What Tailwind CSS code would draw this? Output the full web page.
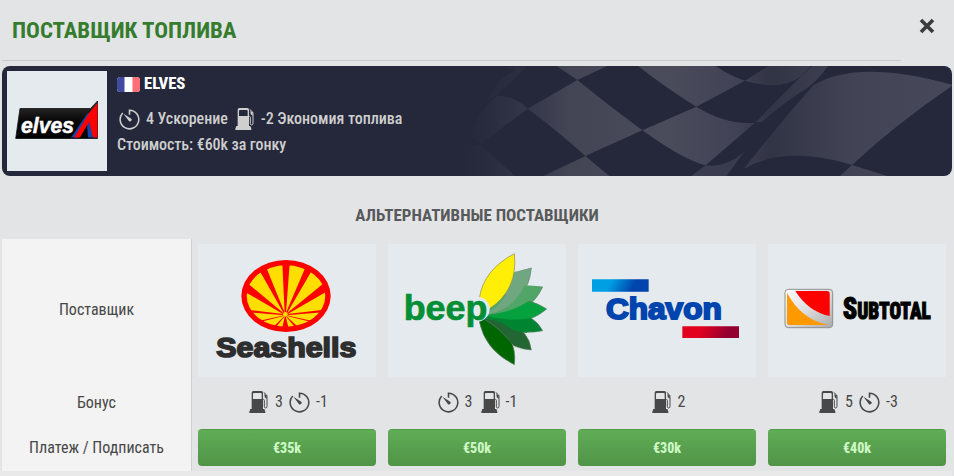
<!doctype html>
<html lang="ru">

<head>
    <meta charset="UTF-8">
    <meta name="viewport" content="width=device-width, initial-scale=1.0">
    <title>Поставщик топлива</title>
    <script src="https://cdn.jsdelivr.net/npm/@tailwindcss/browser@4"></script>
</head>

<body class="h-[476px] overflow-hidden bg-[#e3e4e6] font-['Roboto_Condensed','Roboto',sans-serif] font-stretch-condensed text-base text-[#484848]">

    <!-- icons -->
    <svg class="hidden">
        <symbol id="pump" viewBox="0 0 55 66">
            <path fill="currentColor" fill-rule="evenodd" d="M12 0H36Q41 0 41 5V54H45L48 62V66H0V62L3 54H7V5Q7 0 12 0ZM14 6Q11 6 11 9V24H37V9Q37 6 34 6Z" />
            <path fill="none" stroke="currentColor" stroke-width="3" d="M43 4L51 11Q53 13 53 17V46Q53 51 49 51Q45 51 45 46V28Q45 25 42 25" />
            <path fill="currentColor" d="M45 9L52 13V23L46 19Z" />
        </symbol>
        <symbol id="timer" viewBox="0 0 62 62">
            <path fill="none" stroke="currentColor" stroke-width="4.600" d="M31 17V3.500A27.500 27.500 0 1 1 11 12" />
            <path fill="currentColor" d="M13 14L34 27A5 5 0 1 1 28 34Z" />
        </symbol>
    </svg>

    <header class="flex h-[61px] w-[899px] items-center border-b border-[#c9cacc] ml-0.5 pl-2.5 pt-[3px]">
        <h1 class="text-[22.9px] font-bold text-[#367c2e] whitespace-nowrap">ПОСТАВЩИК ТОПЛИВА</h1>
        <button class="absolute left-[919px] top-[18px]" aria-label="close">
            <svg class="size-4" viewBox="0 0 16 16" stroke="#3c3c3c" stroke-width="3.700">
                <path d="M2 2L14 14M14 2L2 14" />
            </svg>
        </button>
    </header>

    <!-- current supplier -->
    <section class="relative mx-0.5 mt-[5px] flex h-[110px] overflow-hidden rounded-lg bg-[#25273a] p-[5px] text-[#cfcfcf]">
        <svg class="absolute right-0 top-0 h-[110px] w-[492px]" viewBox="0 18 1476 330">
            <defs>
                <linearGradient id="sq" x1="0" x2="1476" y1="0" y2="0" gradientUnits="userSpaceOnUse">
                    <stop offset="0" stop-color="#25273a" />
                    <stop offset=".06" stop-color="#292b3e" />
                    <stop offset=".13" stop-color="#333548" />
                    <stop offset=".22" stop-color="#434555" />
                    <stop offset=".42" stop-color="#4a4c5a" />
                    <stop offset=".56" stop-color="#414256" />
                    <stop offset=".63" stop-color="#313444" />
                    <stop offset=".8" stop-color="#424456" />
                    <stop offset="1" stop-color="#474859" />
                </linearGradient>
            </defs>
            <g fill="url(#sq)">
                <path d="M290 18H442L352 60Z" />
                <path d="M352 60Q450 140 547 211L376 288Q290 210 203 146Z" />
                <path d="M534 18H767Q810 48 855 62L709 140Q620 85 534 18Z" />
                <path d="M855 62L925 18H1052L1025 48Q960 95 855 62Z" />
                <path d="M709 140Q800 196 885 188L737 316Q670 300 547 211Z" />
                <path d="M376 288L448 348H250Z" />
                <path d="M203 146Q160 105 110 108Q50 160 30 220L62 252Z" />
                <path d="M62 256Q110 300 166 348H0V256Z" />
                <path d="M125 24L200 18Q130 90 90 120Q100 60 170 30Z" opacity=".5" />
                <path d="M737 316Q800 324 852 276L800 348H694Z" opacity=".7" />
                <path d="M1056 18H1104Q1070 65 1040 85Q970 130 905 186H888Q960 110 1056 18Z" />
                <path d="M1060 76Q1190 -5 1476 74L1476 78Q1310 190 1176 315Q980 255 852 326Q950 200 1060 76Z" />
                <path d="M1176 315L1282 348H1140Z" />
            </g>
        </svg>
        <div class="flex size-[100px] bg-[#e5eaee]">
            <svg class="size-[100px]" viewBox="0 0 100 100">
                <defs>
                    <linearGradient id="blk" x2="0" y2="1">
                        <stop stop-color="#333" />
                        <stop offset=".5" stop-color="#0a0a0a" />
                        <stop offset="1" />
                    </linearGradient>
                </defs>
                <path fill="url(#blk)" stroke="#111" stroke-width=".8" d="M13 37.500H83.500L90.500 30V67.500H8.700Z" />
                <path fill="#1444ae" d="M64 66.500L80 43L89 38L90 66.500H81L80 53L71 66.500Z" />
                <path fill="#f00" d="M67 66.500L82 42L90.500 32V66.500H86L82 51L73 66.500Z" />
                <text x="14" y="61.500" fill="#fff" stroke="#fff" stroke-width=".5" font-family="Liberation Sans" font-size="22" font-weight="bold" font-style="italic" textLength="53" lengthAdjust="spacingAndGlyphs">elves</text>
            </svg>
        </div>
        <div class="relative ml-2.5">
            <h2 class="flex h-[26px] items-center gap-1 text-[16.7px] font-extrabold text-white">
                <svg class="mt-px h-[15px] w-[23px]" viewBox="0 0 23 15">
                    <clipPath id="fr"><rect width="23" height="15" rx="3.500" /></clipPath>
                    <g clip-path="url(#fr)">
                        <path fill="#fff" d="M0 0h23v15H0z" />
                        <path fill="#3f4aa0" d="M0 0h7.500v15H0z" />
                        <path fill="#ff6e74" d="M15.500 0H23v15h-7.500z" />
                    </g>
                </svg>
                ELVES
            </h2>
            <div class="mt-[9px] flex h-[26px] items-center whitespace-nowrap font-medium tracking-[-0.03px]">
                <svg class="ml-0.5 mr-1.5 size-[21px]"><use href="#timer" /></svg>
                4 Ускорение
                <svg class="ml-[7px] mr-[7px] h-[22px] w-[19px]"><use href="#pump" /></svg>
                -2 Экономия топлива
            </div>
            <div class="h-[26px] leading-[26px] font-medium tracking-[-0.06px]">Стоимость: €60k за гонку</div>
        </div>
    </section>

    <h3 class="mt-[26px] h-[37px] text-center text-[16.95px] leading-[26px] font-bold text-[#58595b]">АЛЬТЕРНАТИВНЫЕ ПОСТАВЩИКИ</h3>

    <!-- alternatives -->
    <section class="flex h-[232px] pl-0.5">
        <div class="grid w-[190px] grid-rows-[142px_44px_46px] items-center border-r border-[#d0d1d3] bg-[#f3f3f3] text-center">
            <div>Поставщик</div>
            <div>Бонус</div>
            <div>Платеж / Подписать</div>
        </div>
        <div class="grid grid-cols-[repeat(4,190px)]">

            <div class="px-1.5 pt-[5px]">
                <div class="h-[133px] bg-[#e5eaee]">
                    <svg class="h-[133px] w-[178px]" viewBox="9 12 534 399">
                        <clipPath id="shell"><ellipse cx="273" cy="168" rx="118" ry="92" /></clipPath>
                        <ellipse cx="273" cy="168" rx="134" ry="108" fill="#f00" />
                        <g clip-path="url(#shell)" fill="#ffde00">
                            <path d="M273 218L284 70L332 80Z" />
                            <path d="M269 218L262 70L213 80Z" />
                            <path d="M276 220L348 96L388 128Z" />
                            <path d="M266 220L196 96L156 128Z" />
                            <path d="M278 222L400 152L400 208Z" />
                            <path d="M264 222L144 152L144 208Z" />
                            <path d="M274 226L384 217L356 244Z" />
                            <path d="M268 226L160 217L188 244Z" />
                            <path d="M273 227L340 244L312 264Z" />
                            <path d="M269 227L204 244L232 264Z" />
                            <path d="M272 228L300 262L281 266Z" />
                            <path d="M270 228L242 262L261 266Z" />
                            <circle cx="271" cy="223" r="7" />
                        </g>
                        <text x="64" y="352" fill="#2e2e2e" stroke="#2e2e2e" stroke-width="5" font-family="Liberation Sans" font-size="81" font-weight="bold" textLength="420" lengthAdjust="spacingAndGlyphs">Seashells</text>
                    </svg>
                </div>
                <div class="flex h-[52px] items-center justify-center pb-0.5 pl-[3px]">
                    <svg class="mr-[7px] h-[22px] w-[19px]"><use href="#pump" /></svg>3
                    <svg class="ml-1.5 mr-1.5 size-[21px]"><use href="#timer" /></svg>-1
                </div>
                <button class="h-[37px] w-full rounded border-t border-[#4f9a48] bg-linear-to-b from-[#60ad56] to-[#509447] text-sm font-extrabold text-[#cdf7c4]">€35k</button>
            </div>

            <div class="px-1.5 pt-[5px]">
                <div class="h-[133px] bg-[#e5eaee]">
                    <svg class="h-[133px] w-[178px]" viewBox="9 12 534 399" stroke-width="2">
                        <g stroke="#667a6b">
                            <path fill="#70a780" d="M290 225Q320 110 439 84Q430 190 310 230Z" />
                            <path fill="#51a566" d="M300 222Q370 130 473 141Q430 235 305 230Z" />
                            <path fill="#006600" d="M283 245Q300 330 388 374Q400 280 300 236Z" />
                            <path fill="#226634" d="M388 318Q412 328 439 330Q436 300 415 276Q370 240 295 236Q340 262 372 300Z" />
                            <path fill="#008432" d="M296 234Q350 245 380 270Q425 282 473 272Q462 250 438 234Q370 238 305 228Z" />
                            <path fill="#05a13f" d="M300 226Q370 215 430 183Q460 190 485 207Q410 270 300 236Z" />
                        </g>
                        <path fill="#51a566" d="M300 222Q380 222 440 176L473 141Q445 136 418 136Q400 200 305 222Z" />
                        <path fill="#70a780" d="M300 222Q370 190 387 96L439 84Q434 112 418 138Q385 210 305 224Z" />
                        <path fill="#ffee05" stroke="#8a8a60" d="M283 175Q295 90 388 41Q400 150 312 207Z" />
                        <path fill="#226634" d="M290 236Q345 250 372 300L388 318Q405 300 415 276Q370 240 300 236Z" />
                        <path fill="#008432" d="M296 234Q350 240 382 270L425 279L438 234Q370 246 305 228Z" />
                        <circle cx="277" cy="207" r="37" fill="#e5eaee" />
                        <path fill="#e5eaee" d="M235 170H262V254H235Z" />
                        <text x="56" y="239" fill="#048f35" stroke="#048f35" font-family="Liberation Sans" font-size="106" font-weight="bold" textLength="251" lengthAdjust="spacingAndGlyphs">beep</text>
                    </svg>
                </div>
                <div class="flex h-[52px] items-center justify-center pb-0.5 pl-px">
                    <svg class="mr-1.5 size-[21px]"><use href="#timer" /></svg>3
                    <svg class="ml-2 mr-1.5 h-[22px] w-[19px]"><use href="#pump" /></svg>-1
                </div>
                <button class="h-[37px] w-full rounded border-t border-[#4f9a48] bg-linear-to-b from-[#60ad56] to-[#509447] text-sm font-extrabold text-[#cdf7c4]">€50k</button>
            </div>

            <div class="px-1.5 pt-[5px]">
                <div class="h-[133px] bg-[#e5eaee]">
                    <svg class="h-[133px] w-[178px]" viewBox="9 12 534 399">
                        <defs>
                            <linearGradient id="cb" x1="80" y1="110" x2="190" y2="165" gradientUnits="userSpaceOnUse">
                                <stop offset=".25" stop-color="#009fe3" />
                                <stop offset=".8" stop-color="#0045ae" />
                            </linearGradient>
                            <linearGradient id="cr" x1="350" y1="250" x2="470" y2="300" gradientUnits="userSpaceOnUse">
                                <stop offset=".25" stop-color="#e2001f" />
                                <stop offset=".85" stop-color="#930030" />
                            </linearGradient>
                        </defs>
                        <path fill="url(#cb)" d="M51 118H221V155H51Z" />
                        <path fill="url(#cr)" d="M322 259H492V294H322Z" />
                        <text x="93" y="238" fill="#0045ae" stroke="#0045ae" stroke-width="6" font-family="Liberation Sans" font-size="90" font-weight="bold" textLength="347" lengthAdjust="spacingAndGlyphs">Chavon</text>
                    </svg>
                </div>
                <div class="flex h-[52px] items-center justify-center pb-0.5 pl-[3px]">
                    <svg class="mr-[7px] h-[22px] w-[19px]"><use href="#pump" /></svg>2
                </div>
                <button class="h-[37px] w-full rounded border-t border-[#4f9a48] bg-linear-to-b from-[#60ad56] to-[#509447] text-sm font-extrabold text-[#cdf7c4]">€30k</button>
            </div>

            <div class="px-1.5 pt-[5px]">
                <div class="h-[133px] bg-[#e5eaee]">
                    <svg class="h-[133px] w-[178px]" viewBox="9 12 534 399">
                        <defs>
                            <linearGradient id="st" x2="1" y2="1">
                                <stop stop-color="#fff" />
                                <stop offset=".5" stop-color="#ddd" />
                                <stop offset="1" stop-color="#aaa" />
                            </linearGradient>
                        </defs>
                        <rect x="60" y="148" width="143" height="115" rx="10" fill="url(#st)" stroke="#8f8f8f" stroke-width="3" />
                        <path fill="#f00" d="M91 153H186Q194 153 194 161V228Q130 215 91 153Z" />
                        <path fill="#f90" d="M66 158Q108 238 190 255H74Q66 255 66 247Z" />
                        <text transform="translate(233 237) scale(.84 1)" class="font-black" stroke="#000" stroke-width="3" font-size="94">S<tspan font-size="69">UBTOTAL</tspan></text>
                    </svg>
                </div>
                <div class="flex h-[52px] items-center justify-center pb-0.5 pl-[3px]">
                    <svg class="mr-[7px] h-[22px] w-[19px]"><use href="#pump" /></svg>5
                    <svg class="ml-1.5 mr-1.5 size-[21px]"><use href="#timer" /></svg>-3
                </div>
                <button class="h-[37px] w-full rounded border-t border-[#4f9a48] bg-linear-to-b from-[#60ad56] to-[#509447] text-sm font-extrabold text-[#cdf7c4]">€40k</button>
            </div>

        </div>
    </section>
    <div class="mr-0.5 h-[5px] bg-[#e9e9e9]"></div>

</body>

</html>
